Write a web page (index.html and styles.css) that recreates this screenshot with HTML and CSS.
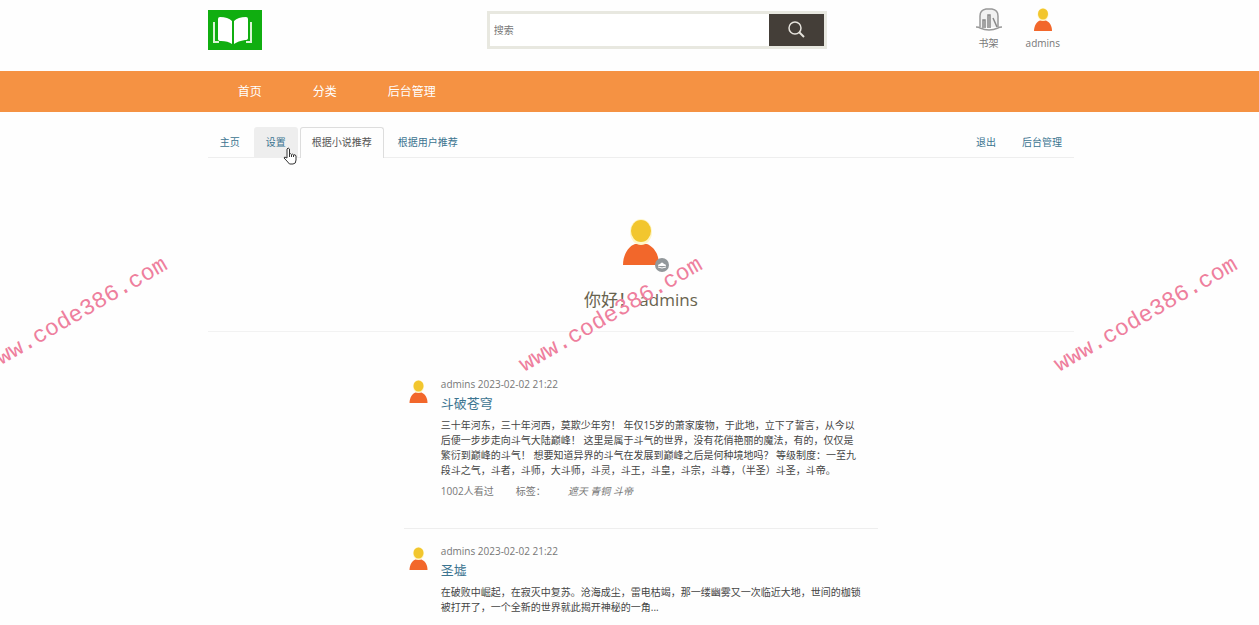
FILE: index.html
```html
<!DOCTYPE html>
<html lang="zh-CN">
<head>
    <meta charset="UTF-8">
    <meta name="viewport" content="width=device-width, initial-scale=1.0">
    <title>个人主页</title>
    <link rel="stylesheet" href="styles.css">
</head>
<body>
    <!-- 公用图标 -->
    <svg class="symbols" aria-hidden="true">
        <symbol id="icon-user" viewBox="0 0 40 48">
            <path d="M2 46C2 35 8 27 14 25h12c7 3 12 10 12 21z" fill="#f2672b"/>
            <ellipse cx="20" cy="13" rx="11" ry="13" fill="#fff6c8"/>
            <ellipse cx="20" cy="12" rx="10" ry="11" fill="#f2c62e"/>
        </symbol>
    </svg>

    <header class="header wrap">
        <a class="logo" href="#" aria-label="首页">
            <svg viewBox="0 0 54 40">
                <rect width="54" height="40" fill="#10ae10"/>
                <path d="M6 12v20h5M43 12v20h-5" fill="none" stroke="#d9f5d5" stroke-width="2"/>
                <path d="M10 9q0-2 2-2 8 0 12 4v23q-4-3-11-3-3 0-3-2z" fill="#fff"/>
                <path d="M40 9q0-2-2-2-8 0-12 4v23q4-3 11-4 3 0 3-2z" fill="#fff"/>
            </svg>
        </a>
        <form class="search">
            <input type="text" placeholder="搜索" aria-label="搜索">
            <button type="button" aria-label="搜索">
                <svg viewBox="0 0 20 20"><circle cx="9" cy="8" r="6" fill="none" stroke="#e6e3dc" stroke-width="1.5"/><path d="M13 12l5 5" stroke="#e6e3dc" stroke-width="2"/></svg>
            </button>
        </form>
        <div class="user-links">
            <a href="#">
                <svg class="shelf-icon" viewBox="0 0 26 24">
                    <path d="M4 19V8q0-6 6-7h6q6 1 6 7v11" fill="#f1f1f1" stroke="#999" stroke-width="1.5"/>
                    <path d="M0 19q3 0 4 1 9 4 18 0 1-1 4-1" fill="none" stroke="#999" stroke-width="1.5"/>
                    <path d="M7 20v-8h2v8M12 20V7h2v13M17 10l4 9" fill="none" stroke="#888" stroke-width="1.5"/>
                </svg>
                <span>书架</span>
            </a>
            <a href="#">
                <svg class="shelf-icon"><use href="#icon-user"/></svg>
                <span>admins</span>
            </a>
        </div>
    </header>

    <nav class="navbar">
        <div class="nav-inner wrap">
            <a href="#">首页</a>
            <a href="#">分类</a>
            <a href="#">后台管理</a>
        </div>
    </nav>

    <main class="wrap">
        <div class="tabs">
            <a href="#">主页</a>
            <a href="#" class="hover">设置
                <svg class="cursor" viewBox="0 0 14 18"><path d="M4 10V2q1-2 2.500 0v5q1-1 2 .5 1-1 2 .5 2-1 2.500 1v4q0 4-3 4H6.500Q4 14 1 11q0-2 3 0zM6.500 7v3M8.500 8v2M10.500 8v2" fill="#fff" stroke="#333"/></svg>
            </a>
            <a href="#" class="active">根据小说推荐</a>
            <a href="#">根据用户推荐</a>
            <a href="#" class="right">退出</a>
            <a href="#">后台管理</a>
        </div>

        <section class="profile">
            <div class="avatar">
                <svg class="avatar-img"><use href="#icon-user"/></svg>
                <svg class="badge" viewBox="0 0 14 14"><circle cx="7" cy="7" r="7" fill="#92989b"/><path d="M3 8q0-2 2-2 2-3 4 0 2 0 2 2z" fill="#fff"/><path d="M3 9q4 2 8 0" fill="none" stroke="#fff"/></svg>
            </div>
            <h1>你好！ admins</h1>
        </section>

        <section class="book-list">
            <article class="book">
                <svg class="book-user"><use href="#icon-user"/></svg>
                <div class="book-body">
                    <div class="book-info">admins <time>2023-02-02 21:22</time></div>
                    <h2><a href="#">斗破苍穹</a></h2>
                    <p>三十年河东，三十年河西，莫欺少年穷！ 年仅15岁的萧家废物，于此地，立下了誓言，从今以后便一步步走向斗气大陆巅峰！ 这里是属于斗气的世界，没有花俏艳丽的魔法，有的，仅仅是繁衍到巅峰的斗气！ 想要知道异界的斗气在发展到巅峰之后是何种境地吗？ 等级制度：一至九段斗之气，斗者，斗师，大斗师，斗灵，斗王，斗皇，斗宗，斗尊，（半圣）斗圣，斗帝。</p>
                    <div class="book-meta">
                        <span>1002人看过</span>
                        <span>标签：</span>
                        <em>遮天 青铜 斗帝</em>
                    </div>
                </div>
            </article>
            <article class="book">
                <svg class="book-user"><use href="#icon-user"/></svg>
                <div class="book-body">
                    <div class="book-info">admins <time>2023-02-02 21:22</time></div>
                    <h2><a href="#">圣墟</a></h2>
                    <p>在破败中崛起，在寂灭中复苏。沧海成尘，雷电枯竭，那一缕幽雾又一次临近大地，世间的枷锁被打开了，一个全新的世界就此揭开神秘的一角...</p>
                </div>
            </article>
        </section>
    </main>

    <!-- 水印 -->
    <div class="watermarks" aria-hidden="true">
        <span class="mark mark-left">www.code386.com</span>
        <span class="mark mark-center">www.code386.com</span>
        <span class="mark mark-right">www.code386.com</span>
    </div>
</body>
</html>
```
FILE: styles.css
```css
* {
    box-sizing: border-box;
}
body {
    position: relative;
    margin: 0;
    background: #fefefe;
    color: #444;
    font-family: "Open Sans", "Noto Sans CJK SC", sans-serif;
    font-size: 10px;
    line-height: 15px;
}
a {
    color: #3b7490;
    text-decoration: none;
}
svg {
    display: block;
}
.symbols {
    position: absolute;
    width: 0;
    height: 0;
}
.wrap {
    padding-left: 16.5%;
    padding-right: 14.7%;
}

/* 顶部 */
.header {
    display: flex;
    justify-content: space-between;
    align-items: flex-start;
    padding-top: 8px;
    height: 71px;
}
.logo svg {
    width: 54px;
    height: 40px;
    margin-top: 2px;
}
.search {
    display: flex;
    flex: 0 0 340px;
    height: 38px;
    margin: 3px 0 0 76px;
    border: 3px solid #e8e8e0;
}
.search input {
    flex: 1;
    min-width: 0;
    padding: 0 4px;
    border: 0;
    background: #fff;
    font: inherit;
}
.search input::placeholder {
    color: #777;
}
.search button {
    display: flex;
    align-items: center;
    justify-content: center;
    width: 55px;
    padding: 0;
    border: 0;
    background: #443e38;
}
.search button svg {
    width: 20px;
    height: 20px;
}
.user-links {
    display: flex;
    gap: 24px;
    padding-right: 14px;
}
.user-links a {
    display: flex;
    flex-direction: column;
    align-items: center;
    gap: 4px;
    color: #777;
}
.shelf-icon {
    width: 26px;
    height: 24px;
}

/* 导航 */
.navbar {
    background: #f59243;
}
.nav-inner {
    display: flex;
    height: 41px;
    align-items: center;
    gap: 51px;
}
.nav-inner a {
    color: #fff;
    font-size: 12px;
}
.nav-inner a:first-child {
    margin-left: 30px;
}

/* 标签页 */
.tabs {
    display: flex;
    gap: 2px;
    margin-top: 15px;
    border-bottom: 1px solid #eee;
}
.tabs a {
    position: relative;
    height: 30px;
    padding: 7px 11px;
    border: 1px solid transparent;
    border-bottom: 0;
    border-radius: 3px 3px 0 0;
}
.tabs .hover {
    background: #eee;
}
.tabs .active {
    height: 31px;
    margin-bottom: -1px;
    border-color: #ddd;
    background: #fefefe;
    color: #555;
}
.tabs .right {
    margin-left: auto;
}
.cursor {
    position: absolute;
    right: 0;
    bottom: -8px;
    z-index: 1;
    width: 14px;
    height: 18px;
}

/* 用户信息 */
.profile {
    display: flex;
    flex-direction: column;
    align-items: center;
    padding: 61px 0 19px;
    border-bottom: 1px solid #f2f2f2;
}
.avatar {
    position: relative;
}
.avatar-img {
    width: 40px;
    height: 48px;
}
.badge {
    position: absolute;
    right: -8px;
    bottom: -5px;
    width: 14px;
    height: 14px;
}
.profile h1 {
    margin: 20px 0 0;
    color: #68634e;
    font-size: 17px;
    font-weight: 400;
    line-height: 25px;
}

/* 小说列表 */
.book-list {
    width: 474px;
    max-width: 100%;
    margin: 26px auto 0;
}
.book {
    display: flex;
    gap: 12px;
    padding: 19px 0 29px 4px;
}
.book + .book {
    border-top: 1px solid #eee;
    padding-top: 15px;
    padding-bottom: 9px;
}
.book-user {
    flex: none;
    width: 21px;
    height: 24px;
    margin-top: 3px;
}
.book-body {
    width: 422px;
}
.book-info {
    color: #777;
}
.book h2 {
    margin: 0;
    font-size: 13px;
    font-weight: 400;
    line-height: 22px;
}
.book p {
    margin: 4px 0 0;
}
.book-meta {
    display: flex;
    gap: 22px;
    margin-top: 6px;
    color: #777;
}

/* 水印 */
.watermarks {
    position: absolute;
    inset: 0;
    overflow: hidden;
    pointer-events: none;
}
.mark {
    position: absolute;
    top: 300px;
    color: #ee7f9d;
    font-family: "Liberation Mono", monospace;
    font-size: 23px;
    line-height: 30px;
    transform: translateX(-50%) rotate(-30deg);
}
.mark-left {
    left: 6%;
}
.mark-center {
    left: 48.5%;
}
.mark-right {
    left: 91%;
}
```
